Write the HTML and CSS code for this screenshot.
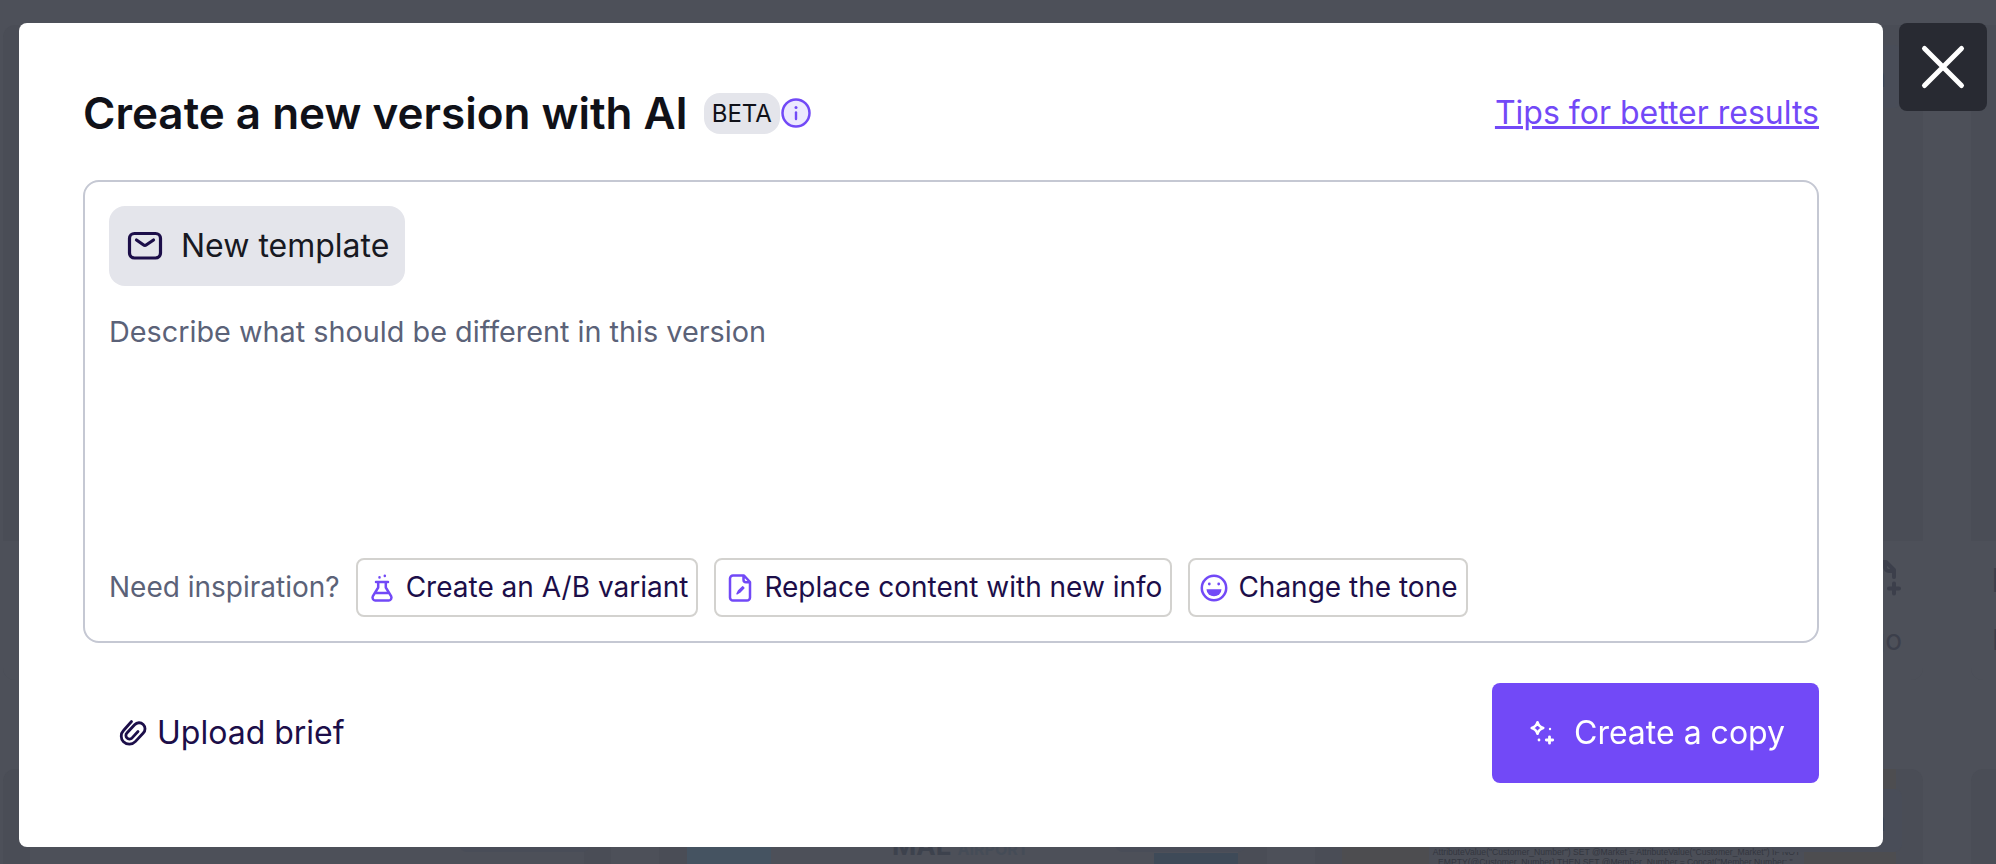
FILE: index.html
```html
<!DOCTYPE html>
<html lang="en">
<head>
  <meta charset="UTF-8">
  <title>Create a new version with AI</title>
  <link rel="stylesheet" href="styles.css">
</head>
<body>
  <div class="gallery">
    <div class="card"><div class="preview"><span class="card-action"></span></div><div class="card-footer"></div></div>
    <div class="card"><div class="preview"><span class="card-action"></span></div><div class="card-footer"></div></div>
    <div class="card">
      <div class="preview"><span class="card-action">n</span></div>
      <div class="card-footer end">
        <svg width="40" height="40" viewBox="0 0 40 40" fill="none" stroke="currentColor" stroke-width="4" stroke-linecap="round" stroke-linejoin="round">
          <path d="M8 34H7a4 4 0 0 1-4-4V9a4 4 0 0 1 4-4h14l8 8v7M20 5v5a4 4 0 0 0 4 4h4M29 26.500v10M24 31.500h10"/>
        </svg>
        <span>go</span>
      </div>
    </div>
    <div class="card">
      <div class="preview"></div>
      <div class="card-footer start"><b>E</b><span>E</span></div>
    </div>

    <div class="card"><div class="preview"><div class="mail"></div><span class="card-action"></span></div></div>
    <div class="card">
      <div class="preview">
        <div class="mail mail-airport">
          <i class="photo"></i>
          <span class="logo">MAE <small>AIRPORT</small></span>
          <i class="photo photo-end"></i>
        </div>
        <span class="card-action"></span>
      </div>
    </div>
    <div class="card">
      <div class="preview">
        <div class="mail mail-code">
          <p>AttributeValue("Customer_Number") SET @Market = AttributeValue("Customer_Market") IF NOT<br>EMPTY(@Customer_Number) THEN SET @Member_Number = Concat("Member Number: ",</p>
        </div>
        <span class="card-action">n</span>
      </div>
    </div>
    <div class="card"><div class="preview"></div></div>
  </div>

  <div class="overlay">
    <div class="modal">
      <div class="modal-header">
        <h1>Create a new version with AI</h1>
        <span class="badge">BETA</span>
        <svg class="info" width="30" height="30" viewBox="0 0 30 30">
          <circle cx="15" cy="15" r="13.500" fill="#ece8fe" stroke="#7249f7" stroke-width="2.500"/>
          <circle cx="15" cy="9.600" r="1.500" fill="#7249f7"/>
          <path d="M15 14.500v6.600" stroke="#7249f7" stroke-width="2.400" stroke-linecap="round"/>
        </svg>
        <a class="tips" href="#">Tips for better results</a>
      </div>

      <div class="prompt">
        <div class="template">
          <svg width="36" height="30" viewBox="0 0 36 30" fill="none" stroke="#1c0e49" stroke-width="3.200" stroke-linecap="round" stroke-linejoin="round">
            <rect x="2.500" y="2.500" width="31" height="24.500" rx="5"/>
            <path d="M9.500 9l6.800 4.800a2.800 2.800 0 0 0 3.200 0L26.500 9"/>
          </svg>
          <span>New template</span>
        </div>
        <div class="placeholder">Describe what should be different in this version</div>
        <div class="inspiration">
          <span class="hint">Need inspiration?</span>
          <button class="idea">
            <svg width="28" height="28" viewBox="0 0 28 28" fill="none" stroke="#7249f7" stroke-width="2.500" stroke-linecap="round" stroke-linejoin="round">
              <path d="M8 8h12M10.200 8v5.500L4.900 22.200A3 3 0 0 0 7.200 26.600h13.600a3 3 0 0 0 2.300-4.400L17.800 13.500V8M7.500 19h13"/>
              <path d="M11.500 3.300v.1M16.800 1.800v.1"/>
            </svg>
            <span>Create an A/B variant</span>
          </button>
          <button class="idea">
            <svg width="28" height="28" viewBox="0 0 28 28" fill="none" stroke="#7249f7" stroke-width="2.500" stroke-linecap="round" stroke-linejoin="round">
              <path d="M7 1.500h11l6 6.500v15.500a3 3 0 0 1-3 3H7a3 3 0 0 1-3-3v-19a3 3 0 0 1 3-3zM17.500 1.800v4a2.500 2.500 0 0 0 2.500 2.500h4"/>
              <path d="M11 19.800l1.500-3 4.200-4 1.200 1.200-4.100 4.200z" fill="#7249f7" stroke-width="1.400"/>
            </svg>
            <span>Replace content with new info</span>
          </button>
          <button class="idea">
            <svg width="28" height="28" viewBox="0 0 28 28">
              <circle cx="14" cy="14" r="12.200" fill="none" stroke="#7249f7" stroke-width="2.500"/>
              <circle cx="9.300" cy="10" r="1.400" fill="#7249f7"/>
              <circle cx="18.700" cy="10" r="1.400" fill="#7249f7"/>
              <path d="M6.500 15.300h15a7.500 7 0 0 1-15 0z" fill="#7249f7"/>
            </svg>
            <span>Change the tone</span>
          </button>
        </div>
      </div>

      <div class="modal-footer">
        <button class="upload">
          <svg width="28" height="28" viewBox="0 0 28 28" fill="none" stroke="#1c0e49" stroke-width="2.800" stroke-linecap="round" stroke-linejoin="round">
            <path d="M12.500 2.500L4.500 11.500a8.200 8.200 0 0 0 0 11.300c3.300 3.300 8.600 3.200 11.800-.2l8-8.600a6 6 0 0 0-.1-8.500c-2.400-2.400-6.300-2.300-8.600.2l-7.700 8.300a3.500 3.500 0 0 0 .1 5c1.400 1.400 3.700 1.300 5.100-.1l5.900-6.400"/>
          </svg>
          <span>Upload brief</span>
        </button>
        <button class="create">
          <svg width="28" height="28" viewBox="0 0 28 28" fill="#fff">
            <path d="M9.500 3.200c.9 3.200 2.600 4.900 5.800 5.800-3.200.9-4.900 2.600-5.800 5.800-.9-3.200-2.600-4.900-5.800-5.800 3.200-.9 4.900-2.600 5.800-5.800z" fill="none" stroke="#fff" stroke-width="2.500" stroke-linejoin="round"/>
            <path d="M21.500 17.800v6.400M18.300 21h6.400" stroke="#fff" stroke-width="2.800" stroke-linecap="round"/>
            <circle cx="22" cy="10" r="1.200"/>
            <circle cx="11" cy="21" r="1.400"/>
          </svg>
          <span>Create a copy</span>
        </button>
      </div>
    </div>

    <button class="close" aria-label="Close">
      <svg width="48" height="48" viewBox="0 0 48 48" stroke="#fff" stroke-width="5" stroke-linecap="round">
        <path d="M5.500 5.500l37 37M42.500 5.500l-37 37"/>
      </svg>
    </button>
  </div>
</body>
</html>
```
FILE: styles.css
```css
* {
  box-sizing: border-box;
}
body {
  margin: 0;
  height: 864px;
  overflow: hidden;
  font-family: Inter, "Liberation Sans", sans-serif;
  background-color: #4d5059;
  color: #101118;
}
h1, p {
  margin: 0;
}
button {
  display: flex;
  align-items: center;
  border: none;
  padding: 0;
  background: none;
  font-family: inherit;
  cursor: pointer;
}
button span {
  padding-bottom: 2px;
}
svg {
  display: block;
  flex: none;
}

/* dimmed page behind the dialog */
.gallery {
  display: grid;
  grid-template-columns: repeat(4, 608px);
  grid-auto-rows: 655px;
  gap: 89px 48px;
  padding: 25px 0 0 3px;
  height: 864px;
  overflow: hidden;
}
.card {
  display: flex;
  flex-direction: column;
  border-radius: 12px;
  overflow: hidden;
  background-color: #4a4d56;
}
.preview {
  position: relative;
  height: 516px;
}
.card-action {
  position: absolute;
  top: 20px;
  right: 21px;
  width: 131px;
  height: 63px;
  padding: 16px 16px 0 0;
  border-radius: 8px;
  background-color: #494d58;
  color: #3b4353;
  font-size: 28px;
  text-align: right;
  line-height: 32px;
}
.card-footer {
  display: flex;
  flex-direction: column;
  height: 139px;
  padding: 16px 21px;
  background-color: #4d5059;
  color: #3c3f4b;
  font-size: 28px;
}
.card-footer span {
  margin-top: 26px;
}
.end {
  align-items: flex-end;
}
.end svg {
  margin-right: -3px;
}
.start b {
  height: 40px;
  padding-top: 4px;
  font-size: 32px;
}
.mail {
  height: 100%;
  margin: 0 27px;
  background-color: #4d5059;
}
.mail-airport {
  display: flex;
  padding-top: 78px;
  margin: 0 29px 0 28px;
}
.photo {
  width: 84px;
  height: 60px;
  background-color: #455361;
}
.photo-end {
  margin: 6px 0 0 auto;
  background-color: #3e4a58;
}
.logo {
  margin: -14px 0 0 121px;
  color: #3d424d;
  font-size: 26px;
  font-weight: 700;
  line-height: 26px;
}
.logo small {
  color: #454c57;
  font-size: 16px;
}
.mail-code {
  padding: 76px 92px 0 87px;
  background-color: #4d4d50;
}
.mail-code p {
  height: 60px;
  padding-top: 3px;
  background-color: #4b4e57;
  color: #33363f;
  font: 8.6px/9.6px "Liberation Sans", sans-serif;
  text-align: center;
  white-space: nowrap;
}

.overlay {
  position: fixed;
  inset: 0;
  display: flex;
  align-items: flex-start;
  gap: 16px;
  padding: 23px 9px 0 19px;
}
.modal {
  flex: 1;
  height: 824px;
  padding: 66px 64px 0;
  border-radius: 8px;
  background-color: #fff;
}
.close {
  justify-content: center;
  width: 88px;
  height: 88px;
  border-radius: 8px;
  background-color: #282a32;
}

.modal-header {
  display: flex;
  align-items: center;
  height: 48px;
  margin-bottom: 43px;
}
h1 {
  font-size: 44px;
  font-weight: 600;
  line-height: 48px;
  white-space: nowrap;
}
.badge {
  width: 76px;
  height: 41px;
  margin-left: 16px;
  border-radius: 16px;
  background-color: #e4e5eb;
  font-size: 24px;
  line-height: 41px;
  text-align: center;
}
.info {
  margin-left: 1px;
}
.tips {
  margin-left: auto;
  padding-bottom: 2px;
  color: #7249f7;
  font-size: 32px;
  text-decoration-thickness: 3px;
}

.prompt {
  display: flex;
  flex-direction: column;
  align-items: flex-start;
  height: 463px;
  padding: 24px;
  border: 2px solid #c5c8d3;
  border-radius: 16px;
}
.template {
  display: flex;
  align-items: center;
  gap: 18px;
  width: 296px;
  height: 80px;
  padding-left: 18px;
  border-radius: 16px;
  background-color: #e4e5eb;
  color: #171922;
  font-size: 32px;
  white-space: nowrap;
}
.template span {
  padding-bottom: 2px;
}
.placeholder {
  margin-top: 28px;
  color: #5b6278;
  font-size: 28.8px;
  line-height: 36px;
}
.inspiration {
  display: flex;
  align-items: center;
  gap: 16px;
  margin-top: auto;
}
.hint {
  padding-bottom: 2px;
  color: #5b6278;
  font-size: 28px;
}
.idea {
  gap: 10px;
  height: 59px;
  padding: 0 8px 0 10px;
  border: 2px solid #d3d2cf;
  border-radius: 8px;
  color: #1c0e49;
  font-size: 28px;
}

.modal-footer {
  display: flex;
  align-items: center;
  justify-content: space-between;
  margin-top: 40px;
}
.upload {
  gap: 10px;
  padding-left: 36px;
  color: #1c0e49;
  font-size: 32px;
}
.create {
  gap: 18px;
  width: 327px;
  height: 100px;
  padding-left: 36px;
  border-radius: 8px;
  background-color: #7249f7;
  color: #fff;
  font-size: 32px;
}
```
